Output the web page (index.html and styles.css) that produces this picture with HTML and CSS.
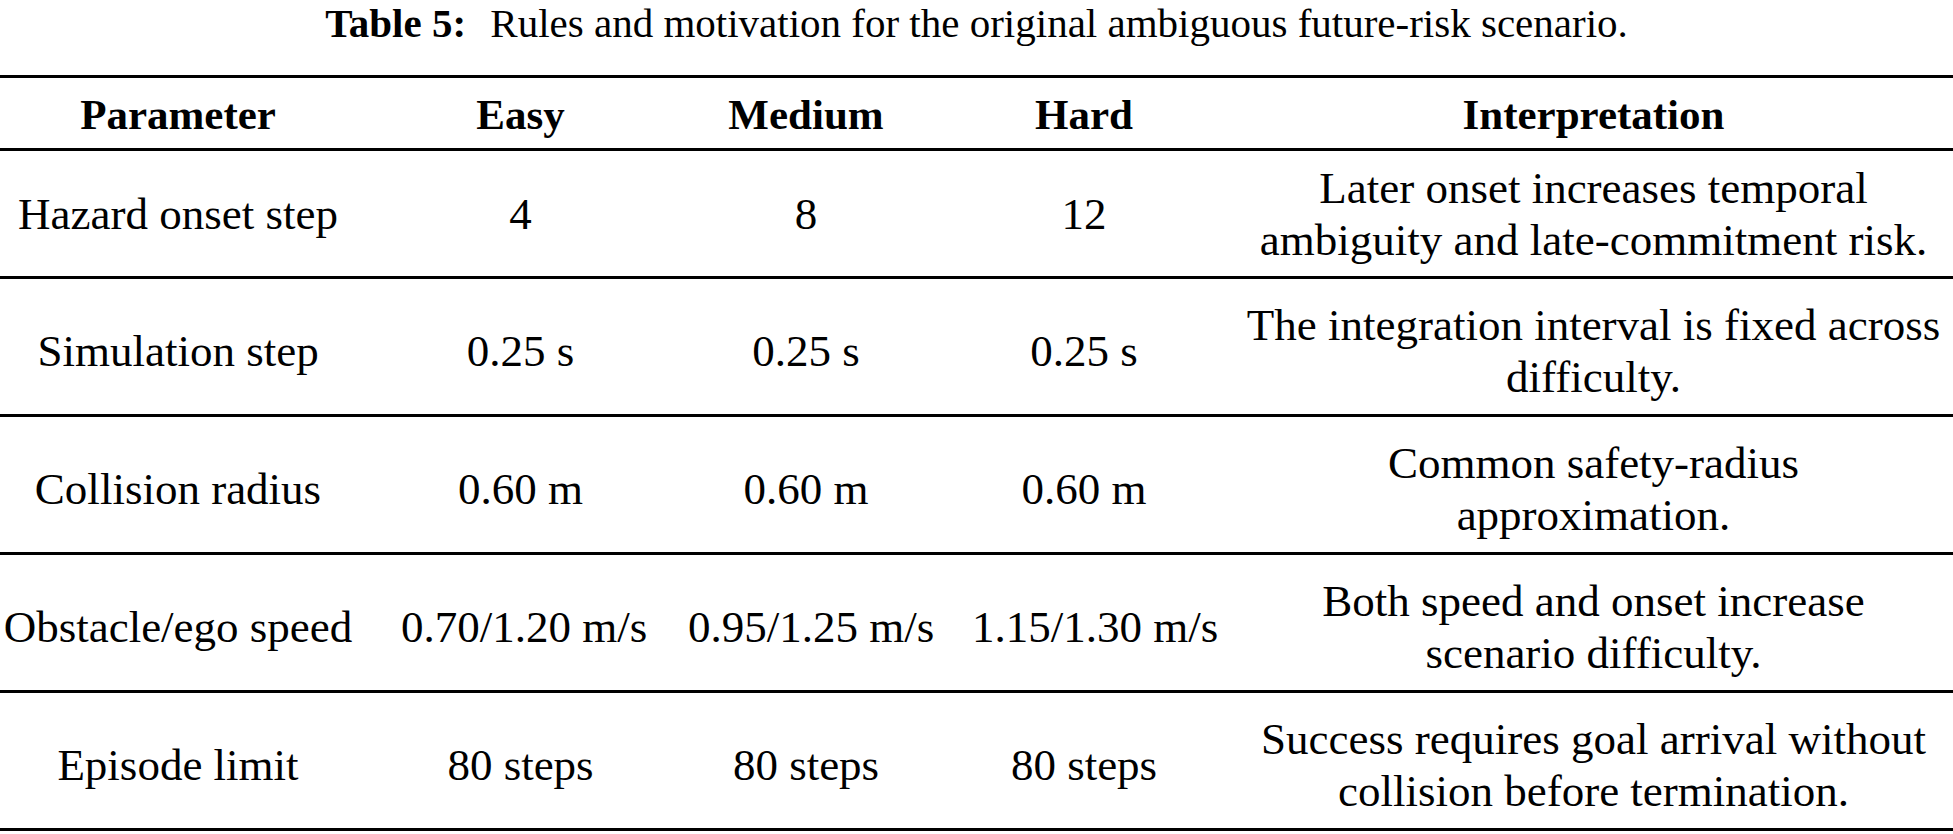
FILE: index.html
```html
<!DOCTYPE html>
<html lang="en">
<head>
<meta charset="utf-8">
<title>Table 5: Rules and motivation</title>
<link rel="stylesheet" href="styles.css">
</head>
<body>
<div class="figure">
  <p class="caption"><span class="label">Table 5:</span> Rules and motivation for the original ambiguous future-risk scenario.</p>
  <div class="table-wrap">
    <table class="rules">
      <colgroup>
        <col class="c-param">
        <col class="c-easy">
        <col class="c-med">
        <col class="c-hard">
        <col class="c-interp">
      </colgroup>
      <thead>
        <tr>
          <th>Parameter</th>
          <th>Easy</th>
          <th>Medium</th>
          <th>Hard</th>
          <th>Interpretation</th>
        </tr>
      </thead>
      <tbody>
        <tr class="first">
          <td>Hazard onset step</td>
          <td>4</td>
          <td>8</td>
          <td>12</td>
          <td>Later onset increases temporal<br>ambiguity and late-commitment risk.</td>
        </tr>
        <tr>
          <td>Simulation step</td>
          <td>0.25 s</td>
          <td>0.25 s</td>
          <td>0.25 s</td>
          <td>The integration interval is fixed across<br>difficulty.</td>
        </tr>
        <tr>
          <td>Collision radius</td>
          <td>0.60 m</td>
          <td>0.60 m</td>
          <td>0.60 m</td>
          <td>Common safety-radius<br>approximation.</td>
        </tr>
        <tr>
          <td>Obstacle/ego speed</td>
          <td>0.70/1.20 m/s</td>
          <td>0.95/1.25 m/s</td>
          <td>1.15/1.30 m/s</td>
          <td>Both speed and onset increase<br>scenario difficulty.</td>
        </tr>
        <tr>
          <td>Episode limit</td>
          <td>80 steps</td>
          <td>80 steps</td>
          <td>80 steps</td>
          <td>Success requires goal arrival without<br>collision before termination.</td>
        </tr>
      </tbody>
    </table>
  </div>
</div>
</body>
</html>
```

FILE: styles.css
```css
html, body {
  margin: 0;
  padding: 0;
  background: #ffffff;
  overflow: hidden;
}

body {
  font-family: "Liberation Serif", "Times New Roman", serif;
  color: #000000;
}

.figure {
  width: 1953px;
  height: 834px;
  overflow: hidden;
}

.caption {
  margin: 0;
  font-size: 41px;
  line-height: 46px;
  text-align: center;
  white-space: nowrap;
}

.label {
  font-weight: bold;
  margin-right: 14px;
}

.table-wrap {
  margin-top: 29px;
  display: flex;
  justify-content: center;
  padding-right: 7px;
}

.rules {
  flex: none;
  width: 1988px;
  table-layout: fixed;
  border-collapse: separate;
  border-spacing: 0;
}

.c-param { width: 398px; }
.c-easy { width: 287px; }
.c-med { width: 284px; }
.c-hard { width: 272px; }
.c-interp { width: 747px; }

.rules th {
  font-size: 43px;
  font-weight: bold;
  line-height: 67px;
  padding: 3px 24px 0;
  text-align: center;
  white-space: nowrap;
  border-top: 3px solid #000000;
  border-bottom: 3px solid #000000;
}

.rules td {
  font-size: 45px;
  line-height: 52px;
  padding: 20px 24px 11px;
  text-align: center;
  vertical-align: middle;
  white-space: nowrap;
  border-bottom: 3px solid #000000;
}

.rules tr.first td {
  padding-top: 11px;
  padding-bottom: 10px;
}
```
